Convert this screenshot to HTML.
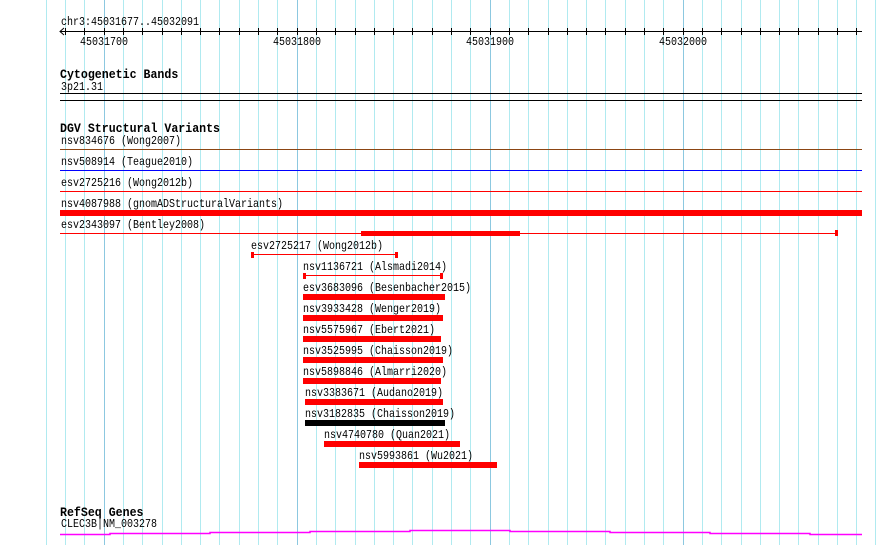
<!DOCTYPE html>
<html><head><style>
body{margin:0;width:890px;height:545px;overflow:hidden;background:#fff;position:relative;font-family:"Liberation Mono",monospace;font-size:10px;color:#000}
.a{position:absolute;white-space:nowrap;line-height:10px;margin-top:2px;transform:scaleY(1.15);transform-origin:0 0}
svg.a{margin-top:0;transform:none}
.h{font-weight:bold;font-size:11.6px}
.r{position:absolute;background:#f00}
.cap{position:absolute;background:#f00;width:3px;height:6px}
</style></head><body>
<svg class="a" style="left:0;top:0" width="890" height="545">
<g stroke="#b0eaf0" stroke-width="1">
<line x1="46.5" y1="0" x2="46.5" y2="545"/><line x1="65.5" y1="0" x2="65.5" y2="545"/><line x1="84.5" y1="0" x2="84.5" y2="545"/>
<line x1="123.5" y1="0" x2="123.5" y2="545"/><line x1="142.5" y1="0" x2="142.5" y2="545"/><line x1="162.5" y1="0" x2="162.5" y2="545"/><line x1="181.5" y1="0" x2="181.5" y2="545"/><line x1="200.5" y1="0" x2="200.5" y2="545"/><line x1="219.5" y1="0" x2="219.5" y2="545"/><line x1="239.5" y1="0" x2="239.5" y2="545"/><line x1="258.5" y1="0" x2="258.5" y2="545"/><line x1="277.5" y1="0" x2="277.5" y2="545"/>
<line x1="316.5" y1="0" x2="316.5" y2="545"/><line x1="335.5" y1="0" x2="335.5" y2="545"/><line x1="355.5" y1="0" x2="355.5" y2="545"/><line x1="374.5" y1="0" x2="374.5" y2="545"/><line x1="393.5" y1="0" x2="393.5" y2="545"/><line x1="412.5" y1="0" x2="412.5" y2="545"/><line x1="432.5" y1="0" x2="432.5" y2="545"/><line x1="451.5" y1="0" x2="451.5" y2="545"/><line x1="470.5" y1="0" x2="470.5" y2="545"/>
<line x1="509.5" y1="0" x2="509.5" y2="545"/><line x1="528.5" y1="0" x2="528.5" y2="545"/><line x1="548.5" y1="0" x2="548.5" y2="545"/><line x1="567.5" y1="0" x2="567.5" y2="545"/><line x1="586.5" y1="0" x2="586.5" y2="545"/><line x1="605.5" y1="0" x2="605.5" y2="545"/><line x1="625.5" y1="0" x2="625.5" y2="545"/><line x1="644.5" y1="0" x2="644.5" y2="545"/><line x1="663.5" y1="0" x2="663.5" y2="545"/>
<line x1="702.5" y1="0" x2="702.5" y2="545"/><line x1="721.5" y1="0" x2="721.5" y2="545"/><line x1="741.5" y1="0" x2="741.5" y2="545"/><line x1="760.5" y1="0" x2="760.5" y2="545"/><line x1="779.5" y1="0" x2="779.5" y2="545"/><line x1="798.5" y1="0" x2="798.5" y2="545"/><line x1="818.5" y1="0" x2="818.5" y2="545"/><line x1="837.5" y1="0" x2="837.5" y2="545"/><line x1="856.5" y1="0" x2="856.5" y2="545"/><line x1="875.5" y1="0" x2="875.5" y2="545"/>
</g>
<g stroke="#8cc8e0" stroke-width="1">
<line x1="104.5" y1="0" x2="104.5" y2="545"/><line x1="297.5" y1="0" x2="297.5" y2="545"/><line x1="490.5" y1="0" x2="490.5" y2="545"/><line x1="683.5" y1="0" x2="683.5" y2="545"/>
</g>
<g stroke="#000" stroke-width="1">
<line x1="60" y1="31.5" x2="862" y2="31.5"/>
<polyline points="64,28 60,31.5 64,35" fill="none"/>
<path d="M65.5 28v7M84.5 28v7M104.5 28v7M123.5 28v7M142.5 28v7M162.5 28v7M181.5 28v7M200.5 28v7M219.5 28v7M239.5 28v7M258.5 28v7M277.5 28v7M297.5 28v7M316.5 28v7M335.5 28v7M355.5 28v7M374.5 28v7M393.5 28v7M412.5 28v7M432.5 28v7M451.5 28v7M470.5 28v7M490.5 28v7M509.5 28v7M528.5 28v7M548.5 28v7M567.5 28v7M586.5 28v7M605.5 28v7M625.5 28v7M644.5 28v7M663.5 28v7M683.5 28v7M702.5 28v7M721.5 28v7M741.5 28v7M760.5 28v7M779.5 28v7M798.5 28v7M818.5 28v7M837.5 28v7M856.5 28v7"/>
<line x1="60" y1="93.5" x2="862" y2="93.5"/><line x1="60" y1="100.5" x2="862" y2="100.5"/>
</g>
<line x1="60" y1="149.5" x2="862" y2="149.5" stroke="#8b4513"/>
<line x1="60" y1="170.5" x2="862" y2="170.5" stroke="#00f"/>
<line x1="60" y1="191.5" x2="862" y2="191.5" stroke="#f00"/>
<line x1="60" y1="233.5" x2="837" y2="233.5" stroke="#f00"/>
<line x1="251" y1="254.5" x2="397" y2="254.5" stroke="#f00"/>
<line x1="303" y1="275.5" x2="442" y2="275.5" stroke="#f00"/>
<polyline points="60,534.5 110,534.5 110,533.5 210,533.5 210,532.5 310,532.5 310,531.5 410,531.5 410,530.5 510,530.5 510,531.5 610,531.5 610,532.5 710,532.5 710,533.5 810,533.5 810,534.5 862,534.5" fill="none" stroke="#f0f" stroke-width="1.5"/>
</svg>
<div class="a" style="left:61px;top:16px">chr3:45031677..45032091</div>
<div class="a" style="left:80px;top:36px">45031700</div>
<div class="a" style="left:273px;top:36px">45031800</div>
<div class="a" style="left:466px;top:36px">45031900</div>
<div class="a" style="left:659px;top:36px">45032000</div>
<div class="a h" style="left:60px;top:68px">Cytogenetic Bands</div>
<div class="a" style="left:61px;top:81px">3p21.31</div>
<div class="a h" style="left:60px;top:122px">DGV Structural Variants</div>
<div class="a" style="left:61px;top:135px">nsv834676 (Wong2007)</div>
<div class="a" style="left:61px;top:156px">nsv508914 (Teague2010)</div>
<div class="a" style="left:61px;top:177px">esv2725216 (Wong2012b)</div>
<div class="a" style="left:61px;top:198px">nsv4087988 (gnomADStructuralVariants)</div>
<div class="r" style="left:60px;top:210px;width:802px;height:6px"></div>
<div class="a" style="left:61px;top:219px">esv2343097 (Bentley2008)</div>
<div class="r" style="left:361px;top:231px;width:159px;height:5px"></div>
<div class="cap" style="left:835px;top:230px"></div>
<div class="a" style="left:251px;top:240px">esv2725217 (Wong2012b)</div>
<div class="cap" style="left:251px;top:252px"></div><div class="cap" style="left:395px;top:252px"></div>
<div class="a" style="left:303px;top:261px">nsv1136721 (Alsmadi2014)</div>
<div class="cap" style="left:303px;top:273px"></div><div class="cap" style="left:440px;top:273px"></div>
<div class="a" style="left:303px;top:282px">esv3683096 (Besenbacher2015)</div>
<div class="r" style="left:303px;top:294px;width:142px;height:6px"></div>
<div class="a" style="left:303px;top:303px">nsv3933428 (Wenger2019)</div>
<div class="r" style="left:303px;top:315px;width:140px;height:6px"></div>
<div class="a" style="left:303px;top:324px">nsv5575967 (Ebert2021)</div>
<div class="r" style="left:303px;top:336px;width:138px;height:6px"></div>
<div class="a" style="left:303px;top:345px">nsv3525995 (Chaisson2019)</div>
<div class="r" style="left:303px;top:357px;width:140px;height:6px"></div>
<div class="a" style="left:303px;top:366px">nsv5898846 (Almarri2020)</div>
<div class="r" style="left:303px;top:378px;width:138px;height:6px"></div>
<div class="a" style="left:305px;top:387px">nsv3383671 (Audano2019)</div>
<div class="r" style="left:305px;top:399px;width:138px;height:6px"></div>
<div class="a" style="left:305px;top:408px">nsv3182835 (Chaisson2019)</div>
<div class="r" style="left:305px;top:420px;width:140px;height:6px;background:#000"></div>
<div class="a" style="left:324px;top:429px">nsv4740780 (Quan2021)</div>
<div class="r" style="left:324px;top:441px;width:136px;height:6px"></div>
<div class="a" style="left:359px;top:450px">nsv5993861 (Wu2021)</div>
<div class="r" style="left:359px;top:462px;width:138px;height:6px"></div>
<div class="a h" style="left:60px;top:506px">RefSeq Genes</div>
<div class="a" style="left:61px;top:518px">CLEC3B|NM_003278</div>
</body></html>
